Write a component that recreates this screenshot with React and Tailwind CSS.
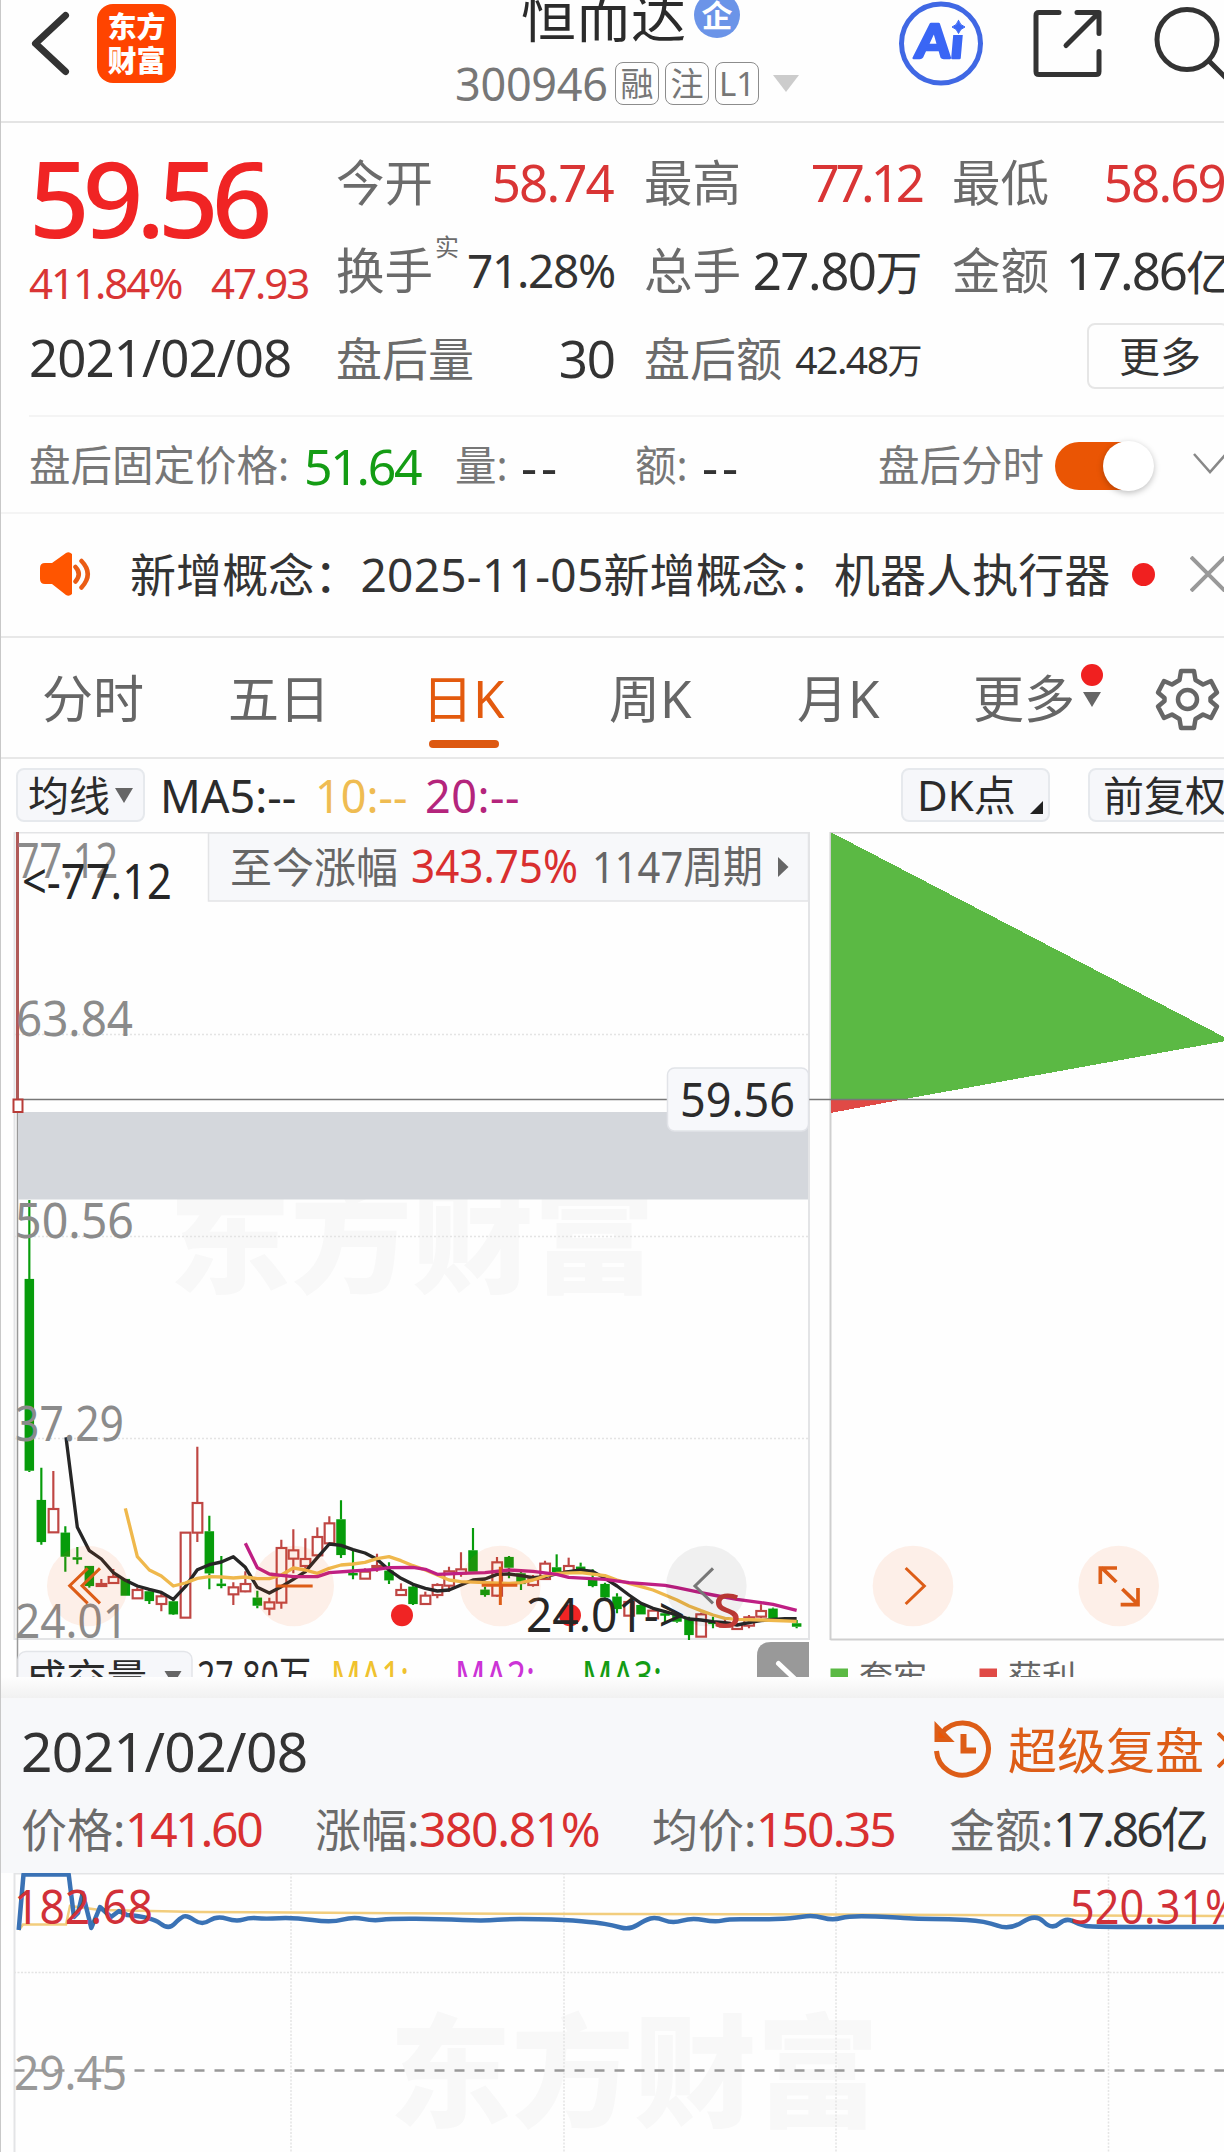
const TABS = [
  { label: '分时', cls: 'w-[186px]' },
  { label: '五日', cls: 'w-[200px]' },
  { label: '日K', cls: 'w-[181px]', active: true },
  { label: '周K', cls: 'w-[188px]' },
  { label: '月K', cls: 'w-[176px]' },
];

// x, high, body top, body bottom, low, direction (1 = up)
const CANDLES = [
  [88, -600, -363, 212, 216, 0], [124, 203, 300, 426, 434, 0], [160, 213, 327, 397, 397, 1],
  [196, 379, 398, 470, 515, 0], [232, 441, 472, 476, 493, 0], [268, 498, 498, 558, 563, 0],
  [304, 537, 552, 558, 560, 1], [340, 507, 531, 549, 552, 1], [376, 537, 537, 587, 587, 0],
  [412, 562, 570, 595, 595, 1], [448, 570, 574, 603, 612, 0], [484, 580, 589, 612, 634, 1],
  [520, 598, 604, 643, 645, 0], [556, 398, 398, 653, 653, 1], [592, 140, 309, 398, 426, 1],
  [628, 347, 394, 520, 568, 0], [664, 468, 551, 556, 565, 0], [700, 547, 562, 583, 615, 1],
  [736, 514, 552, 574, 577, 1], [772, 572, 593, 617, 625, 0], [808, 593, 607, 626, 646, 1],
  [844, 419, 444, 608, 626, 1], [880, 388, 451, 476, 520, 1], [916, 415, 477, 498, 520, 1],
  [952, 382, 411, 466, 466, 1], [988, 349, 370, 430, 435, 1], [1023, 301, 358, 465, 474, 0],
  [1059, 450, 519, 523, 538, 0], [1095, 505, 515, 536, 536, 1], [1131, 461, 498, 502, 515, 1],
  [1167, 487, 512, 541, 552, 0], [1203, 550, 570, 585, 585, 1], [1239, 555, 560, 612, 615, 0],
  [1276, 575, 587, 612, 612, 1], [1312, 550, 555, 585, 595, 1], [1347, 500, 514, 557, 575, 1],
  [1383, 457, 508, 520, 530, 1], [1419, 384, 451, 515, 515, 0], [1455, 560, 569, 585, 590, 0],
  [1491, 471, 487, 587, 590, 1], [1527, 468, 471, 503, 535, 0], [1563, 515, 520, 552, 570, 0],
  [1599, 525, 538, 555, 560, 1], [1635, 482, 491, 537, 540, 1], [1670, 463, 502, 516, 516, 0],
  [1706, 473, 498, 514, 514, 1], [1742, 488, 500, 510, 510, 0], [1778, 508, 537, 558, 562, 0],
  [1815, 548, 552, 592, 600, 0], [1851, 580, 590, 627, 640, 0], [1887, 600, 606, 647, 647, 1],
  [1923, 610, 615, 643, 643, 0], [1959, 625, 632, 655, 655, 1], [1995, 630, 640, 645, 670, 0],
  [2031, 640, 645, 665, 668, 0], [2067, 650, 655, 705, 720, 0], [2103, 638, 643, 710, 710, 1],
  [2139, 650, 665, 668, 685, 0], [2175, 655, 668, 680, 680, 1], [2211, 670, 675, 687, 687, 1],
  [2247, 645, 652, 677, 685, 1], [2283, 613, 633, 650, 655, 1], [2319, 623, 626, 655, 655, 0],
  [2390, 660, 670, 680, 685, 0],
];

const MA5 =
  '198,112 232,382 268,452 304,477 340,518 376,541 412,558 448,568 484,577 520,598 556,560 592,509 628,494 664,486 700,470 736,502 772,562 808,579 844,560 880,538 916,515 952,473 988,432 1023,436 1059,449 1095,459 1131,478 1167,510 1203,535 1239,553 1276,565 1312,573 1347,570 1383,555 1419,540 1455,537 1491,523 1527,522 1563,527 1599,533 1635,530 1670,522 1706,515 1742,510 1778,514 1815,535 1851,558 1887,585 1923,610 1959,625 1995,635 2031,645 2067,657 2103,660 2139,665 2175,668 2211,675 2247,668 2283,662 2319,658 2355,656 2390,656';
const MA10 =
  '376,325 412,470 448,510 484,528 520,558 556,549 592,535 628,530 664,531 700,534 736,531 772,536 808,536 844,525 880,504 916,510 952,520 988,505 1023,495 1059,492 1095,487 1131,476 1167,470 1203,482 1239,497 1276,510 1312,525 1347,540 1383,545 1455,548 1527,550 1563,548 1599,540 1635,528 1670,520 1742,518 1815,527 1851,540 1887,550 1923,560 1959,570 1995,585 2031,600 2067,618 2103,632 2139,645 2175,655 2211,658 2283,660 2390,664';
const MA20 =
  '736,430 772,503 808,522 844,526 880,530 952,530 988,518 1059,513 1131,508 1167,503 1239,502 1276,508 1312,523 1383,520 1455,518 1527,510 1599,514 1670,523 1706,532 1815,538 1887,548 1995,556 2031,563 2103,578 2139,585 2211,598 2283,608 2319,613 2390,631';

const MINUTE = [
  [18.7, 1930], [23.5, 1874.5], [68.7, 1874.5], [74, 1917], [78, 1913], [82.7, 1893], [91.3, 1928],
  [100, 1907], [111, 1917], [119, 1911], [127, 1915], [152, 1917], [168.6, 1930], [180, 1918],
  [187, 1915], [202, 1925.5], [217, 1915.5], [236, 1921.7], [250, 1917.5], [265, 1919], [293, 1917.5],
  [332, 1922.7], [353, 1916.7], [373, 1921], [390, 1918.7], [441, 1919], [484, 1921], [511, 1918.7],
  [566, 1920], [597, 1922.7], [612, 1925], [629.6, 1930], [645, 1920], [656, 1917], [672.5, 1923.5],
  [692, 1917.7], [715, 1922.3], [729, 1919], [760, 1919.5], [791.5, 1918.5], [813, 1915],
  [832.5, 1920.5], [850, 1915.5], [901, 1917.7], [916.5, 1919], [948, 1919], [985, 1921],
  [1010, 1930.3], [1035.5, 1913.5], [1052, 1930], [1066, 1917.5], [1080, 1925], [1092, 1927], [1224, 1927],
];

export default function App() {
  return (
    <div className="w-[1224px] h-[2152px] overflow-hidden bg-[#fefefe] border-l border-[#c8c8c8] font-['Noto_Sans','Noto_Sans_CJK_SC',sans-serif] text-[#333] leading-none whitespace-nowrap flex flex-col">
      <Header />
      <Quote />
      <AfterHours />
      <Notice />
      <Tabs />
      <Toolbar />
      <KChart />
      <div className="h-[21px] shrink-0 bg-gradient-to-b from-[#fefefe] to-[#f1f1f1]" />
      <Replay />
      <MinuteChart />
    </div>
  );
}

function Header() {
  return (
    <header className="h-[123px] shrink-0 flex border-b-2 border-[#e4e4e4]">
      <svg className="w-[96px] h-[90px] shrink-0" viewBox="1 0 96 90" fill="none" stroke="#333" strokeWidth="7" strokeLinecap="round" strokeLinejoin="round">
        <path d="M65.500 15.500 35.500 43.500 65.500 71.500" />
      </svg>
      <div className="w-[79px] h-[79px] mt-1 rounded-2xl bg-[#ff4400] text-white font-black text-[29px] leading-[34px] pb-[3px] flex flex-col items-center justify-center font-['Noto_Sans_CJK_SC',sans-serif]">
        <span>东方</span>
        <span>财富</span>
      </div>
      <div className="w-[723px] shrink-0 flex flex-col">
        <div className="h-[40px] pl-[345px] flex items-end">
          <span className="text-[55px] leading-[47px] mb-px text-[#2b2b2b]">恒而达</span>
          <span className="w-[46px] h-[46px] ml-[8px] mb-[2px] rounded-full bg-[#6b94e8] text-white text-[31px] font-bold flex items-center justify-center">企</span>
        </div>
        <div className="h-[43px] mt-[22px] pl-[279px] flex items-center text-[#777]">
          <span className="text-[45px] w-[160px] tracking-[-0.3px]">300946</span>
          <Chip>融</Chip>
          <Chip>注</Chip>
          <Chip>L1</Chip>
          <svg width="26" height="17" viewBox="0 0 26 17" className="ml-2">
            <path d="M0 0h26L13 17z" fill="#ccc" />
          </svg>
        </div>
      </div>
      <svg className="w-[325px] h-[90px] shrink-0" viewBox="899 0 325 90" fill="none" stroke="#333" strokeWidth="5" strokeLinecap="round" strokeLinejoin="round">
        <circle cx="941" cy="43.500" r="39.500" stroke="#4068e4" />
        <text x="914" y="58.500" fontSize="47" fontWeight="900" fill="#3a66f5" stroke="#3a66f5" strokeWidth="2.500" textLength="48" lengthAdjust="spacingAndGlyphs" fontFamily="Lato" transform="translate(5.500 0) skewX(-5)">Ai</text>
        <path d="M951.500 18h14v16.500h-14z" fill="#fefefe" stroke="#fefefe" strokeWidth="1" />
        <path d="M958.500 20.500q1.500 5 6.500 6.500-5 1.500-6.500 6.500-1.500-5-6.500-6.500 5-1.500 6.500-6.500z" fill="#3a66f5" stroke="#3a66f5" strokeWidth="1" />
        <path d="M1059 12.500h-20q-3 0-3 3v56q0 3 3 3h57q3 0 3-3v-20M1077 12.500h22v21M1098 13.500l-32 32" />
        <circle cx="1187" cy="39.500" r="30" />
        <path d="M1209 61l18 18" />
      </svg>
    </header>
  );
}

function Chip({ children }) {
  return (
    <span className="w-[44px] h-[43px] mr-[6px] rounded-lg border-[1.5px] border-[#8c8c8c] text-[33px] flex items-center justify-center">
      {children}
    </span>
  );
}

function Quote() {
  return (
    <section className="h-[292px] shrink-0 pt-[15px] pl-[28px] flex">
      <div className="w-[307px] shrink-0">
        <div className="h-[119px] pb-[2px] flex items-center text-[106px] font-medium text-[#f02424]">
          <span className="tracking-[-7px]">59.56</span>
        </div>
        <div className="h-[52px] flex items-center text-[42px] text-[#d93535]">
          <span className="w-[182px] tracking-[-2px]">411.84%</span>
          <span className="tracking-[-2px]">47.93</span>
        </div>
        <div className="h-[97px] flex items-center text-[51px] tracking-[-0.900px]">2021/02/08</div>
      </div>
      <div className="w-[277px] shrink-0">
        <Stat label="今开"><span className="text-[51px] tracking-[-1.800px] text-[#d93535]">58.74</span></Stat>
        <Stat label="换手" sup="实"><span className="text-[46px] tracking-[-1.300px] mr-[-2px]">71.28%</span></Stat>
        <Stat label="盘后量" small><span className="text-[51px] tracking-[-1px] mr-[-2px]">30</span></Stat>
      </div>
      <div className="w-[277px] shrink-0 ml-[31px]">
        <Stat label="最高"><span className="text-[51px] tracking-[-4px] text-[#d93535]">77.12</span></Stat>
        <Stat label="总手"><span className="text-[51px] tracking-[-1.500px]">27.80<i className="not-italic text-[47px]">万</i></span></Stat>
        <Stat label="盘后额" small><span className="text-[39px] tracking-[-1.500px]">42.48<i className="not-italic text-[35px]">万</i></span></Stat>
      </div>
      <div className="w-[277px] shrink-0 ml-[31px]">
        <Stat label="最低"><span className="text-[51px] tracking-[-1.800px] mr-[4px] text-[#d93535]">58.69</span></Stat>
        <Stat label="金额"><span className="text-[51px] tracking-[-2px] mr-[-2px]">17.86<i className="not-italic text-[47px]">亿</i></span></Stat>
        <div className="h-[88px] flex items-center justify-end">
          <span className="w-[142px] h-[66px] mb-[4px] pl-[30px] rounded-lg border-2 border-[#e6e6e6] text-[41px] flex items-center">更多</span>
        </div>
      </div>
    </section>
  );
}

function Stat({ label, sup, small, children }) {
  return (
    <div className="h-[88px] flex items-center text-[#333]">
      <span className={small ? 'text-[46px] text-[#6b6b6b]' : 'text-[48.500px] text-[#6b6b6b]'}>{label}</span>
      {sup && <span className="text-[24px] text-[#6b6b6b] mb-[46px] ml-[2px]">{sup}</span>}
      <span className="ml-auto">{children}</span>
    </div>
  );
}

function AfterHours() {
  return (
    <section className="h-[99px] shrink-0 ml-0 border-b-2 border-[#f4f4f4] flex flex-col text-[#777] text-[41.500px]">
      <div className="h-[2px] ml-[28px] bg-[#f4f4f4]" />
      <div className="flex-1 pl-[28px] pt-[2px] flex items-center">
        <span className="w-[275px] shrink-0">盘后固定价格:</span>
        <span className="w-[151px] shrink-0 text-[50px] tracking-[-2.300px] text-[#149c14]">51.64</span>
        <span className="w-[66px] shrink-0">量:</span>
        <span className="w-[114px] shrink-0 text-[#333] text-[50px] tracking-[4px]">--</span>
        <span className="w-[67px] shrink-0">额:</span>
        <span className="w-[176px] shrink-0 text-[#333] text-[50px] tracking-[4px]">--</span>
        <span className="w-[177px] shrink-0">盘后分时</span>
        <span className="w-[99px] h-[48px] shrink-0 rounded-full bg-gradient-to-r from-[#ea5504] from-70% to-[#f4f4f4] to-70% flex items-center justify-end">
          <span className="w-[51px] h-[50px] rounded-full bg-white shadow-[0_2px_6px_rgba(0,0,0,0.25)]" />
        </span>
        <svg width="34" height="22" viewBox="0 0 34 22" fill="none" stroke="#888" strokeWidth="2.500" className="ml-[39px] mb-[4px] shrink-0">
          <path d="M1 1l16 18L33 1" />
        </svg>
      </div>
    </section>
  );
}

function Notice() {
  return (
    <section className="h-[124px] shrink-0 pl-[39px] pb-[2px] border-b-2 border-[#e8e8e8] flex items-center">
      <svg width="52" height="44" viewBox="0 0 52 44" className="shrink-0">
        <path d="M0 16q0-5 5-5h7L26 1q3-2 6 1v40q-3 3-6 1L12 32H5q-5 0-5-5z" fill="#ff5500" />
        <path d="M35.500 15q6.500 7 0 14.500M41.500 9q12.500 13 0 26.500" fill="none" stroke="#ea5c14" strokeWidth="4.500" strokeLinecap="round" />
      </svg>
      <span className="w-[978px] shrink-0 ml-[38px] text-[46px] tracking-[0.080px]">
        新增概念：<i className="not-italic tracking-[0.300px]">2025-11-05</i>新增概念：机器人执行器
      </span>
      <span className="w-[23px] h-[23px] ml-[24px] rounded-full bg-[#f02020] shrink-0" />
      <svg width="36" height="36" viewBox="0 0 36 36" stroke="#999" strokeWidth="4" className="ml-[35px] shrink-0">
        <path d="M1 1l34 34M35 1L1 35" />
      </svg>
    </section>
  );
}

function Tabs() {
  return (
    <nav className="h-[121px] shrink-0 pl-[41px] border-b-2 border-[#e8e8e8] flex text-[51px] text-[#666]">
      {TABS.map((t) => (
        <div key={t.label} className={`${t.cls} shrink-0 h-full`}>
          {t.active ? (
            <div className="w-[76px] h-full flex flex-col items-start text-[#e35a0e]">
              <span className="h-[102px] pt-[19px] ml-[-6px] flex items-center">{t.label}</span>
              <span className="w-[70px] h-[8px] ml-[1px] rounded-full bg-[#dd5810]" />
            </div>
          ) : (
            <span className="h-[102px] pt-[19px] flex items-center">{t.label}</span>
          )}
        </div>
      ))}
      <span className="w-[99px] h-[102px] pt-[19px] shrink-0 flex items-center">更多</span>
      <svg className="w-[155px] h-[118px] shrink-0" viewBox="1072 637 155 118">
        <circle cx="1092" cy="674" r="11" fill="#f02020" />
        <path d="M1083 691h18l-9 15z" fill="#666" />
        <path
          d="M1181 670h13l1.500 9 7.500 4.500 8-3.500 6 11.500-6.500 5.500v3l6.500 5.500-6 11.500-8-3.500-7.500 4.500-1.500 9h-13l-1.500-9-7.500-4.500-8 3.500-6-11.500 6.500-5.500v-3l-6.500-5.500 6-11.500 8 3.500 7.500-4.500z"
          fill="none"
          stroke="#666"
          strokeWidth="4.500"
          strokeLinejoin="round"
        />
        <circle cx="1187.500" cy="698.500" r="9.500" fill="none" stroke="#666" strokeWidth="4.500" />
      </svg>
    </nav>
  );
}

function Toolbar() {
  return (
    <div className="h-[73px] shrink-0 pl-[15px] pt-[9px] flex text-[#2b2b2b] text-[41px]">
      <span className="w-[129px] h-[54px] pl-[10px] shrink-0 rounded-lg border-2 border-[#e6e9ed] bg-[#f6f7fa] flex items-center">
        均线
        <svg width="18" height="15" viewBox="0 0 18 15" className="ml-[5px]">
          <path d="M0 0h18L9 15z" fill="#666" />
        </svg>
      </span>
      <span className="h-[54px] flex items-center text-[45px] ml-[15px]">
        <span className="w-[155px]">MA5:--</span>
        <span className="w-[110px] text-[#efbc52]">10:--</span>
        <span className="w-[476px] tracking-[0.500px] text-[#b4257c]">20:--</span>
      </span>
      <span className="w-[149px] h-[54px] pl-[14px] shrink-0 rounded-lg border-2 border-[#e6e9ed] bg-[#f6f7fa] flex items-center">
        <span className="w-[113px] text-[42px]">DK点</span>
        <svg width="13" height="13" viewBox="0 0 13 13" className="mt-6">
          <path d="M13 0v13H0z" fill="#222" />
        </svg>
      </span>
      <span className="w-[170px] h-[54px] ml-[38px] pl-[13px] shrink-0 rounded-lg border-2 border-[#e6e9ed] bg-[#f6f7fa] flex items-center">
        前复权
      </span>
    </div>
  );
}

// text squeezed or stretched to a fixed width
function Fit({ x, y, w, size, fill, children, ...rest }) {
  return (
    <text x={x} y={y} textLength={w} lengthAdjust="spacingAndGlyphs" fontSize={size} fill={fill} {...rest}>
      {children}
    </text>
  );
}

function KChart() {
  return (
    <svg className="w-[1223px] h-[845px] shrink-0 block" viewBox="1 832 1223 845">
      <Fit x={169} y={1284} w={486} size={116} fill="#f8f8f8" fontWeight="900">东方财富</Fit>

      <g stroke="#e3e4e6" strokeWidth="2" fill="none">
        <path d="M14.500 832.500H809V1639H14.500z" />
      </g>
      <g stroke="#e4e4e4" strokeWidth="1.500" strokeDasharray="2 2">
        <path d="M14 1034.500H809M14 1236.500H809M14 1438.500H809" />
      </g>
      <path d="M17.500 1112v565" stroke="#999" strokeWidth="1.500" />
      <path d="M18 1112H808V1199.500H18z" fill="#d4d7dc" />

      <path d="M208.500 833H808.500V901H208.500z" fill="#f7f8fa" stroke="#e3e4e6" strokeWidth="1.500" />
      <Fit x={230} y={883} w={168} size={42} fill="#666">至今涨幅</Fit>
      <Fit x={411} y={883} w={167} size={45} fill="#d92f2f">343.75%</Fit>
      <Fit x={592} y={883} w={171} size={44} fill="#666">1147周期</Fit>
      <path d="M778 857l10.500 10-10.500 10z" fill="#666" />

      <path d="M830.500 1640V832.500H1224M830.500 1639.500H1224" fill="none" stroke="#cfcfcf" strokeWidth="2" />
      <g shapeRendering="crispEdges">
        <path d="M830.500 832L1226 1038v3L905 1099H830.500z" fill="#5bb944" />
        <path d="M830.500 1099H905L830.500 1113z" fill="#e04a46" />
      </g>
      <path d="M18 1099.500H1224" stroke="#777" strokeWidth="1.500" />

      <path d="M17.500 832V1099" stroke="#b05a58" strokeWidth="3" />
      <path d="M13.500 1099.500h9v12.500h-9z" fill="#fff" stroke="#b83c38" strokeWidth="2" />

      <rect x="667.500" y="1068" width="141" height="63" rx="7" fill="#f7f8fb" stroke="#e1e3e8" strokeWidth="1.500" />
      <Fit x={680} y={1117} w={115} size={48} fill="#2b2b2b">59.56</Fit>

      <g transform="translate(0 1400) scale(0.33333)">
        {CANDLES.map(([x, hi, top, bot, lo, up]) => (
          <g key={x} stroke={up ? '#bf4643' : '#079c0b'} strokeWidth="6.500">
            <path d={`M${x} ${hi}V${top}M${x} ${bot}V${lo}`} />
            <rect
              x={up ? x - 14 : x - 11}
              y={up ? top : top + 3}
              width={up ? 29 : 22}
              height={up ? bot - top : Math.max(bot - top - 6, 1)}
              fill={up ? 'none' : '#079c0b'}
            />
          </g>
        ))}
        <g fill="none" strokeWidth="10" strokeLinejoin="round">
          <polyline points={MA5} stroke="#262626" />
          <polyline points={MA10} stroke="#efb84c" />
          <polyline points={MA20} stroke="#bf1f84" />
        </g>
        <circle cx="1206" cy="646" r="33" fill="#f02424" />
        <circle cx="1710" cy="646" r="33" fill="#f02424" />
      </g>

      <g fill="#8b8b8b">
        <Fit x={17} y={878} w={101} size={49}>77.12</Fit>
        <Fit x={16} y={1036} w={117} size={49}>63.84</Fit>
        <Fit x={15} y={1238} w={119} size={49}>50.56</Fit>
        <Fit x={15} y={1440.500} w={109} size={49}>37.29</Fit>
        <Fit x={15} y={1638} w={113} size={48}>24.01</Fit>
      </g>
      <Fit x={22} y={899} w={150} size={49} fill="#262626">&lt;-77.12</Fit>
      <Fit x={526} y={1632} w={159} size={48} fill="#262626">24.01-&gt;</Fit>
      <Fit x={713} y={1628} w={28} size={47} fill="#c23b37" fontWeight="500">S</Fit>

      <g transform="translate(0 1400) scale(0.33333)">
        <g fill="#f05a0a" fillOpacity="0.09">
          <circle cx="262" cy="558" r="121" />
          <circle cx="881" cy="558" r="121" />
          <circle cx="1501" cy="558" r="121" />
          <circle cx="2739" cy="558" r="121" />
          <circle cx="3356" cy="558" r="121" />
        </g>
        <circle cx="2119" cy="558" r="121" fill="#000" fillOpacity="0.055" />
        <g fill="none" stroke="#dd5d17" strokeWidth="9">
          <path d="M263 505l-54 52 54 53M300 505l-54 52 54 53" />
          <path d="M828 558h110M1445 556h107M1501 500v115" />
          <path d="M2717 504l56 54-56 54" />
          <path d="M3349 546l-45-44M3301 552v-48h50M3367 567l45 44M3414 564v50h-52" strokeWidth="11" />
        </g>
        <path d="M2139 505l-54 53 54 52" fill="none" stroke="#777" strokeWidth="9" />
      </g>

      {/* volume header, cut off by the replay sheet */}
      <rect x="18" y="1651.500" width="174" height="50" rx="8" fill="#f6f7fa" stroke="#e3e5e9" strokeWidth="1.500" />
      <Fit x={26} y={1693} w={121} size={40} fill="#2b2b2b">成交量</Fit>
      <path d="M164.500 1671h17l-8.500 14z" fill="#666" />
      <Fit x={197} y={1692} w={114} size={43} fill="#2b2b2b">27.80万</Fit>
      <Fit x={331} y={1692} w={78} size={43} fill="#f0c22e">MA1:</Fit>
      <Fit x={455} y={1692} w={80} size={43} fill="#cc33d6">MA2:</Fit>
      <Fit x={582} y={1692} w={80} size={43} fill="#149c14">MA3:</Fit>
      <path d="M757 1677v-21q0-14 14-14H809v35z" fill="#999" />
      <path d="M778.500 1663.500l18 17" stroke="#fff" strokeWidth="5" strokeLinecap="round" />
      <path d="M830.500 1668.500h17.500v9h-17.500z" fill="#5bb944" />
      <Fit x={859} y={1690} w={68} size={34} fill="#666">套牢</Fit>
      <path d="M979.500 1668.500h17.500v9h-17.500z" fill="#e04a46" />
      <Fit x={1008} y={1690} w={68} size={34} fill="#666">获利</Fit>
    </svg>
  );
}

function Replay() {
  return (
    <section className="h-[175px] shrink-0 bg-[#f7f8fa] flex flex-col">
      <div className="h-[104px] pl-[20px] flex items-center">
        <span className="w-[912px] shrink-0 text-[55px] tracking-[-0.600px]">2021/02/08</span>
        <svg width="60" height="60" viewBox="0 0 60 60" fill="none" stroke="#dd5d17" strokeWidth="5" className="shrink-0">
          <path d="M3.500 31a26 26 0 1 0 5.500-18" />
          <path d="M3.500 6v14H17z" fill="#ea5504" strokeWidth="4" />
          <path d="M30.500 14v16.500h12.500" strokeWidth="6" />
        </svg>
        <span className="ml-[15px] text-[49px]  text-[#dd5d17]">超级复盘</span>
        <svg width="20" height="36" viewBox="0 0 20 36" fill="none" stroke="#dd5d17" strokeWidth="4" className="ml-[13px] shrink-0">
          <path d="M1 1l17 17L1 35" />
        </svg>
      </div>
      <div className="h-[60px] mt-[-3px] pl-[20px] flex items-center text-[46px]">
        <Field w="w-[294px]" label="价格" value="141.60" cls="text-[#d93030] tracking-[-2.300px]" />
        <Field w="w-[337px]" label="涨幅" value="380.81%" cls="text-[#d93030] tracking-[-1.400px]" />
        <Field w="w-[297px]" label="均价" value="150.35" cls="text-[#d93030] tracking-[-1.900px]" />
        <Field w="w-[290px]" label="金额" value="17.86亿" cls="tracking-[-3px]" />
      </div>
    </section>
  );
}

function Field({ w, label, value, cls }) {
  return (
    <span className={`${w} flex items-center shrink-0`}>
      <span className="w-[104px] text-[#6b6b6b]">{label}:</span>
      <span className={`text-[48px] ${cls}`}>{value}</span>
    </span>
  );
}

// quadratic segments through the midpoints, so the flat part stays smooth
function smooth(pts) {
  let d = `M${pts[0].join(' ')}`;
  pts.forEach(([x, y], i) => {
    if (i < 1 || i > pts.length - 2) return;
    if (i < 11) {
      d += `L${x} ${y}`;
      return;
    }
    const [nx, ny] = pts[i + 1];
    d += `Q${x} ${y} ${(x + nx) / 2} ${(y + ny) / 2}`;
  });
  return `${d}L${pts[pts.length - 1].join(' ')}`;
}

function MinuteChart() {
  return (
    <svg className="w-[1223px] h-[279px] shrink-0 block" viewBox="1 1873 1223 279">
      <Fit x={389} y={2117} w={490} size={122} fill="#f8f8f8" fontWeight="900">东方财富</Fit>
      <path d="M14.500 2152V1873.500H1224" fill="none" stroke="#e3e4e6" strokeWidth="2" />
      <path d="M291 1873v279M564 1873v279M836 1873v279M1108.500 1873v279M14 1972.500H1224" stroke="#e4e4e4" strokeWidth="1.500" strokeDasharray="2 1.500" />
      <path d="M14.500 2070.500H1224" stroke="#999" strokeWidth="2.500" strokeDasharray="10 10" />
      <path d="M19 1930l4-5.500H66L70 1906l30 4 50 1 50 1 200 1.300 212 .7 224 .5 388 1.500" fill="none" stroke="#f2cd7d" strokeWidth="2.500" />
      <path d={smooth(MINUTE)} fill="none" stroke="#3a72b5" strokeWidth="4.500" strokeLinejoin="round" />
      <Fit x={14} y={1924} w={139} size={48} fill="#d13038">182.68</Fit>
      <Fit x={1070} y={1923.500} w={171} size={48} fill="#d13038">520.31%</Fit>
      <Fit x={14} y={2089.500} w={113} size={48} fill="#999">29.45</Fit>
    </svg>
  );
}
